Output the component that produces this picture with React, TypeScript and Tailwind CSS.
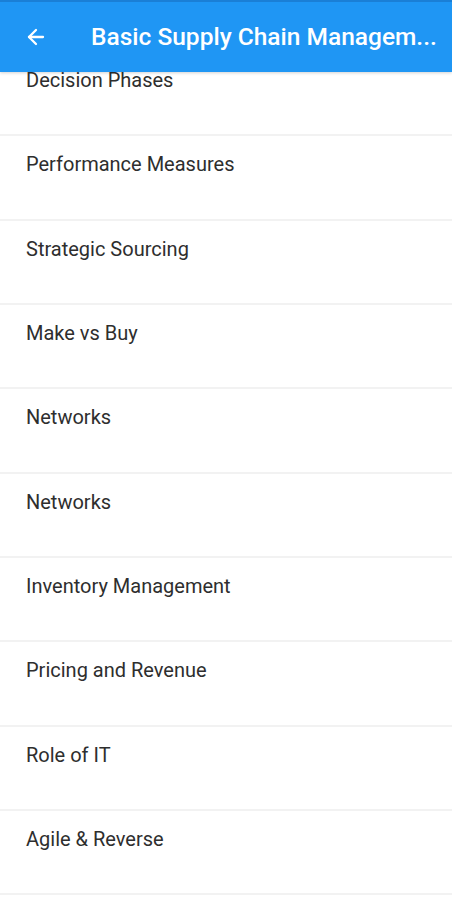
import { ArrowLeft } from 'lucide-react';

const topics = [
  'Decision Phases',
  'Performance Measures',
  'Strategic Sourcing',
  'Make vs Buy',
  'Networks',
  'Networks',
  'Inventory Management',
  'Pricing and Revenue',
  'Role of IT',
  'Agile & Reverse',
];

export default function App() {
  return (
    <div className="h-[900px] w-[452px] overflow-hidden bg-white" style={{ fontFamily: 'Roboto, "Noto Sans", sans-serif' }}>
      {/* App bar */}
      <div className="relative z-10 h-[72px] bg-[#1f96f4] border-t-2 border-[#1a7fd6] shadow-[0_1px_3px_rgba(0,0,0,0.18)] flex items-center">
        <div className="w-[91px] shrink-0 flex items-center pl-[24px]">
          <ArrowLeft size={24} strokeWidth={2.3} className="text-white" />
        </div>
        <h1 className="flex-1 min-w-0 whitespace-nowrap text-white text-[24.5px] font-medium leading-none">
          Basic Supply Chain Managem...
        </h1>
      </div>

      {/* List (scrolled) */}
      <ul className="-mt-[20px]">
        {topics.map((t, i) => (
          <li key={i} className="h-[84.35px] border-b-2 border-[#f2f2f2] pl-[26px] pt-[16px]">
            <span className="text-[20px] leading-[24px] text-[#2e2e2e]">{t}</span>
          </li>
        ))}
      </ul>
    </div>
  );
}
